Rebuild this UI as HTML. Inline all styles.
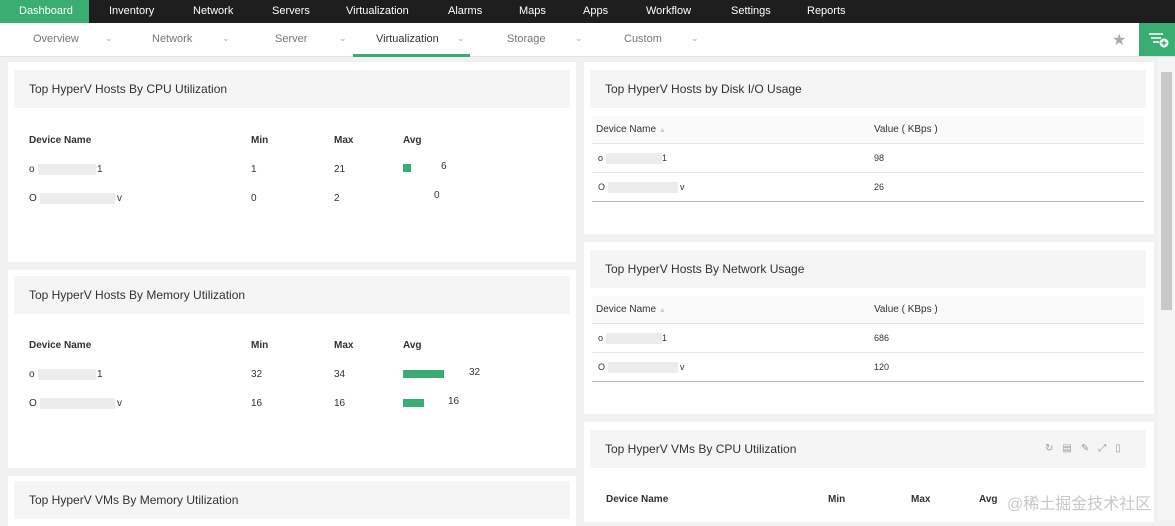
<!DOCTYPE html>
<html><head><style>
*{margin:0;padding:0;box-sizing:border-box}
body{width:1175px;height:520px;overflow:hidden;background:#f1f1f1;font-family:"Liberation Sans",sans-serif;font-size:11px;color:#333;position:relative}
.top{position:absolute;left:0;top:0;width:1175px;height:23px;background:#1e1e1e}
.top span{position:absolute;top:5px;color:#fff;font-size:11px}
.dash{position:absolute;left:0;top:0;width:89px;height:23px;background:#3aae72}
.sub{position:absolute;left:0;top:23px;width:1175px;height:34px;background:#fff;border-bottom:1px solid #e2e2e2}
.sub span{position:absolute;top:10px;color:#777;font-size:11px}
.sub i{position:absolute;top:10px;color:#aaa;font-style:normal;font-size:9px}
.p{position:absolute;background:#fff}
.h{position:absolute;background:#f5f5f5;font-size:12px;color:#333;padding-left:15px;line-height:38px}
.t{position:absolute;font-size:10px;color:#333}
.b{font-weight:bold;color:#333}
.blur{position:absolute;height:11px;background:#ececec}
.bar{position:absolute;height:8px;background:#3aae72}
.ln{position:absolute;height:1px;background:#e6e6e6}
</style></head><body>
<div class="top"><div class="dash"></div>
<span style="left:19px">Dashboard</span><span style="left:109px">Inventory</span><span style="left:193px">Network</span><span style="left:272px">Servers</span><span style="left:346px">Virtualization</span><span style="left:448px">Alarms</span><span style="left:519px">Maps</span><span style="left:583px">Apps</span><span style="left:646px">Workflow</span><span style="left:731px">Settings</span><span style="left:807px">Reports</span></div>
<div class="sub">
<span style="left:33px">Overview</span><i style="left:105px">⌄</i>
<span style="left:152px">Network</span><i style="left:222px">⌄</i>
<span style="left:275px">Server</span><i style="left:339px">⌄</i>
<span style="left:376px;color:#333">Virtualization</span><i style="left:457px">⌄</i>
<span style="left:507px">Storage</span><i style="left:575px">⌄</i>
<span style="left:624px">Custom</span><i style="left:691px">⌄</i>
<div style="position:absolute;left:353px;top:31px;width:117px;height:3px;background:#3aae72"></div>
<span style="left:1112px;top:7px;font-size:16px;color:#aaa">★</span>
<div style="position:absolute;left:1139px;top:0;width:36px;height:33px;background:#3aae72">
<svg width="36" height="33"><g stroke="#fff" stroke-width="1.5"><line x1="10" y1="11" x2="24" y2="11"/><line x1="12" y1="15" x2="22" y2="15"/><line x1="14" y1="19" x2="20" y2="19"/></g><circle cx="25" cy="20" r="4.5" fill="#fff"/><g stroke="#3aae72" stroke-width="1.5"><line x1="22.5" y1="20" x2="27.5" y2="20"/><line x1="25" y1="17.5" x2="25" y2="22.5"/></g></svg></div>
</div>
<div style="position:absolute;left:1158px;top:58px;width:17px;height:462px;background:#f5f5f5"></div>
<div style="position:absolute;left:1161px;top:72px;width:11px;height:238px;background:#c8c8c8"></div>

<!-- left -->
<div class="p" style="left:8px;top:62px;width:568px;height:200px"></div>
<div class="h" style="left:14px;top:70px;width:556px">Top HyperV Hosts By CPU Utilization</div>
<div class="t b" style="left:29px;top:135px">Device Name</div><div class="t b" style="left:251px;top:135px">Min</div><div class="t b" style="left:334px;top:135px">Max</div><div class="t b" style="left:403px;top:135px">Avg</div>
<div class="t" style="left:29px;top:164px">o</div><div class="blur" style="left:38px;top:164px;width:58px"></div><div class="t" style="left:97px;top:164px">1</div><div class="t" style="left:251px;top:164px">1</div><div class="t" style="left:334px;top:164px">21</div><div class="bar" style="left:403px;top:164px;width:8px"></div><div class="t" style="left:441px;top:161px">6</div>
<div class="t" style="left:29px;top:193px">O</div><div class="blur" style="left:40px;top:193px;width:75px"></div><div class="t" style="left:117px;top:193px">v</div><div class="t" style="left:251px;top:193px">0</div><div class="t" style="left:334px;top:193px">2</div><div class="t" style="left:434px;top:190px">0</div>

<div class="p" style="left:8px;top:270px;width:568px;height:198px"></div>
<div class="h" style="left:14px;top:276px;width:556px">Top HyperV Hosts By Memory Utilization</div>
<div class="t b" style="left:29px;top:340px">Device Name</div><div class="t b" style="left:251px;top:340px">Min</div><div class="t b" style="left:334px;top:340px">Max</div><div class="t b" style="left:403px;top:340px">Avg</div>
<div class="t" style="left:29px;top:369px">o</div><div class="blur" style="left:38px;top:369px;width:58px"></div><div class="t" style="left:97px;top:369px">1</div><div class="t" style="left:251px;top:369px">32</div><div class="t" style="left:334px;top:369px">34</div><div class="bar" style="left:403px;top:370px;width:41px"></div><div class="t" style="left:469px;top:367px">32</div>
<div class="t" style="left:29px;top:398px">O</div><div class="blur" style="left:40px;top:398px;width:75px"></div><div class="t" style="left:117px;top:398px">v</div><div class="t" style="left:251px;top:398px">16</div><div class="t" style="left:334px;top:398px">16</div><div class="bar" style="left:403px;top:399px;width:21px"></div><div class="t" style="left:448px;top:396px">16</div>

<div class="p" style="left:8px;top:476px;width:568px;height:50px"></div>
<div class="h" style="left:14px;top:481px;width:556px">Top HyperV VMs By Memory Utilization</div>

<!-- right -->
<div class="p" style="left:584px;top:62px;width:570px;height:172px"></div>
<div class="h" style="left:590px;top:70px;width:556px">Top HyperV Hosts by Disk I/O Usage</div>
<div style="position:absolute;left:592px;top:116px;width:552px;height:27px;background:#fafafa"></div>
<div class="t" style="left:596px;top:124px">Device Name <span style="color:#ccc;font-size:7px">▲</span></div><div class="t" style="left:874px;top:124px">Value ( KBps )</div>
<div class="ln" style="left:592px;top:143px;width:552px"></div>
<div class="t" style="left:598px;top:153px;font-size:9px">o</div><div class="blur" style="left:606px;top:153px;width:56px"></div><div class="t" style="left:662px;top:153px;font-size:9px">1</div><div class="t" style="left:874px;top:153px;font-size:9px">98</div>
<div class="ln" style="left:592px;top:172px;width:552px"></div>
<div class="t" style="left:598px;top:182px;font-size:9px">O</div><div class="blur" style="left:608px;top:182px;width:70px"></div><div class="t" style="left:680px;top:182px;font-size:9px">v</div><div class="t" style="left:874px;top:182px;font-size:9px">26</div>
<div class="ln" style="left:592px;top:201px;width:552px;background:#bbb"></div>

<div class="p" style="left:584px;top:242px;width:570px;height:172px"></div>
<div class="h" style="left:590px;top:250px;width:556px">Top HyperV Hosts By Network Usage</div>
<div style="position:absolute;left:592px;top:296px;width:552px;height:27px;background:#fafafa"></div>
<div class="t" style="left:596px;top:304px">Device Name <span style="color:#ccc;font-size:7px">▲</span></div><div class="t" style="left:874px;top:304px">Value ( KBps )</div>
<div class="ln" style="left:592px;top:323px;width:552px"></div>
<div class="t" style="left:598px;top:333px;font-size:9px">o</div><div class="blur" style="left:606px;top:333px;width:56px"></div><div class="t" style="left:662px;top:333px;font-size:9px">1</div><div class="t" style="left:874px;top:333px;font-size:9px">686</div>
<div class="ln" style="left:592px;top:352px;width:552px"></div>
<div class="t" style="left:598px;top:362px;font-size:9px">O</div><div class="blur" style="left:608px;top:362px;width:70px"></div><div class="t" style="left:680px;top:362px;font-size:9px">v</div><div class="t" style="left:874px;top:362px;font-size:9px">120</div>
<div class="ln" style="left:592px;top:381px;width:552px;background:#bbb"></div>

<div class="p" style="left:584px;top:422px;width:570px;height:100px"></div>
<div class="h" style="left:590px;top:430px;width:556px">Top HyperV VMs By CPU Utilization</div>
<div class="t" style="left:1045px;top:443px;color:#999;font-size:10px;letter-spacing:9px">↻▤✎⤢▯</div>
<div class="t b" style="left:606px;top:494px">Device Name</div><div class="t b" style="left:828px;top:494px">Min</div><div class="t b" style="left:911px;top:494px">Max</div><div class="t b" style="left:979px;top:494px">Avg</div>
<div class="t" style="left:1007px;top:490px;font-size:16px;color:#c8c8c8;font-family:'Liberation Sans','Noto Sans CJK SC',sans-serif">@稀土掘金技术社区</div>
</body></html>
